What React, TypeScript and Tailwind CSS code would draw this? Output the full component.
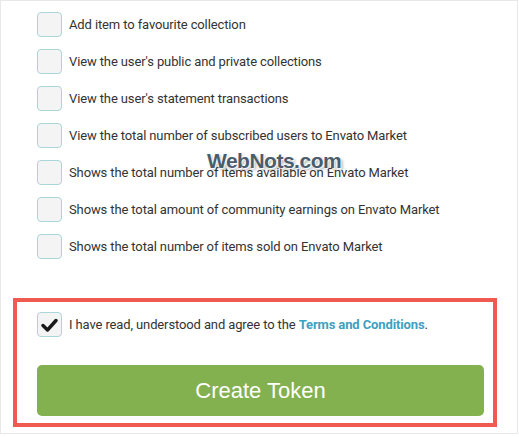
import React from "react";

const scopes = [
  "Add item to favourite collection",
  "View the user's public and private collections",
  "View the user's statement transactions",
  "View the total number of subscribed users to Envato Market",
  "Shows the total number of items available on Envato Market",
  "Shows the total amount of community earnings on Envato Market",
  "Shows the total number of items sold on Envato Market",
];

function Box({ checked }: { checked?: boolean }) {
  return (
    <span className="flex h-[25px] w-[25px] shrink-0 items-center justify-center rounded-[4px] border border-[#a9d6d8] bg-[#f4f4f4]">
      {checked && (
        <svg width="17" height="14" viewBox="0 0 17 14">
          <path d="M2 7.5 L6.5 12 L15 2.5" fill="none" stroke="#1a1a1a" strokeWidth="3.4" strokeLinecap="round" strokeLinejoin="round" />
        </svg>
      )}
    </span>
  );
}

export default function App() {
  return (
    <div className="relative h-[437px] w-[519px] bg-white font-['Roboto',sans-serif] text-[13px] tracking-[-0.12px] text-[#333]">
      <div className="h-[434px] w-[518px] border border-[#e8e8e8] px-3 pt-[11px]">
        <div className="flex flex-col gap-3 pl-6">
          {scopes.map((s) => (
            <label key={s} className="flex items-center gap-[7px]">
              <Box />
              <span>{s}</span>
            </label>
          ))}
        </div>

        <div className="mr-2 mt-[39px] border-4 border-[#ef5b50] pb-[7px] pl-5 pr-[9px] pt-[10px]">
          <label className="flex items-center gap-[7px]">
            <Box checked />
            <span>
              I have read, understood and agree to the{" "}
              <span className="font-bold text-[#3d9fc2]">Terms and Conditions</span>.
            </span>
          </label>
          <button className="mt-[28px] flex h-[51px] w-full items-center justify-center rounded-[5px] bg-[#83b14f] font-['Liberation_Sans',sans-serif] text-[22px] tracking-normal text-white">
            Create Token
          </button>
        </div>
      </div>

      <div className="absolute left-[207px] top-[150px] font-['Liberation_Sans',sans-serif] text-[21px] font-bold leading-none tracking-[-0.5px] text-[#4b5d6c] [text-shadow:1px_1px_1px_#fff,-1px_-1px_1px_#fff,2px_2px_3px_rgba(0,0,0,0.35)]">
        WebNots.com
      </div>
    </div>
  );
}
